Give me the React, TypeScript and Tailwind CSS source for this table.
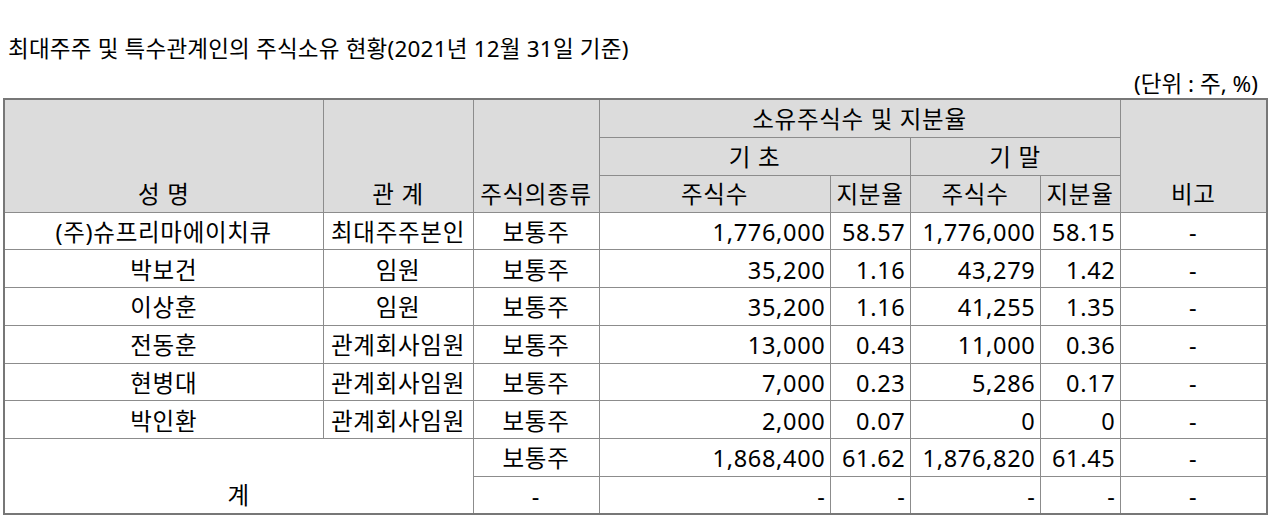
const rows = [
  { name: "(주)슈프리마에이치큐", rel: "최대주주본인", kind: "보통주", a: "1,776,000", b: "58.57", c: "1,776,000", d: "58.15" },
  { name: "박보건", rel: "임원", kind: "보통주", a: "35,200", b: "1.16", c: "43,279", d: "1.42" },
  { name: "이상훈", rel: "임원", kind: "보통주", a: "35,200", b: "1.16", c: "41,255", d: "1.35" },
  { name: "전동훈", rel: "관계회사임원", kind: "보통주", a: "13,000", b: "0.43", c: "11,000", d: "0.36" },
  { name: "현병대", rel: "관계회사임원", kind: "보통주", a: "7,000", b: "0.23", c: "5,286", d: "0.17" },
  { name: "박인환", rel: "관계회사임원", kind: "보통주", a: "2,000", b: "0.07", c: "0", d: "0" },
];

// header cells spanning rows sit at the bottom, the rest are centred
const thSpan = "border border-[#8c8c8c] bg-[#dcdcdc] font-normal text-center align-bottom px-[2px] pb-[3px]";
const th = "border border-[#8c8c8c] bg-[#dcdcdc] font-normal text-center align-middle px-[2px] pt-[1px]";
const td = "border border-[#8c8c8c] text-center align-middle px-[2px] pt-[2px]";
const num = "border border-[#8c8c8c] text-right align-middle pr-[4px] pl-[2px] pt-[2px]";

export default function App() {
  return (
    <div className="w-[1280px] h-[530px] bg-white text-black overflow-hidden font-['Noto_Sans','Noto_Sans_CJK_KR',sans-serif]">
      <div className="pt-[34px] pl-[8px] text-[22.5px] leading-[30px] tracking-[0.2px] whitespace-nowrap">
        최대주주 및 특수관계인의 주식소유 현황(2021년 12월 31일 기준)
      </div>
      <div className="mt-[6px] pr-[22px] text-right text-[22.5px] leading-[28px]">(단위 : 주, %)</div>
      <table className="ml-[3px] w-[1263px] table-fixed border-collapse border-2 border-[#777] text-[23.5px] leading-[30px] tracking-[0.7px] whitespace-nowrap">
        <colgroup>
          <col className="w-[319px]" />
          <col className="w-[150px]" />
          <col className="w-[126px]" />
          <col className="w-[231px]" />
          <col className="w-[80px]" />
          <col className="w-[130px]" />
          <col className="w-[80px]" />
          <col className="w-[147px]" />
        </colgroup>
        <thead>
          <tr className="h-[38px]">
            <th rowSpan={3} className={thSpan}>성 명</th>
            <th rowSpan={3} className={thSpan}>관 계</th>
            <th rowSpan={3} className={thSpan}>주식의종류</th>
            <th colSpan={4} className={th}>소유주식수 및 지분율</th>
            <th rowSpan={3} className={thSpan}>비고</th>
          </tr>
          <tr className="h-[38px]">
            <th colSpan={2} className={th}>기 초</th>
            <th colSpan={2} className={th}>기 말</th>
          </tr>
          <tr className="h-[37px]">
            <th className={th}>주식수</th>
            <th className={th}>지분율</th>
            <th className={th}>주식수</th>
            <th className={th}>지분율</th>
          </tr>
        </thead>
        <tbody>
          {rows.map((r) => (
            <tr key={r.name} className="h-[37.75px]">
              <td className={td}>{r.name}</td>
              <td className={td}>{r.rel}</td>
              <td className={td}>{r.kind}</td>
              <td className={num}>{r.a}</td>
              <td className={num}>{r.b}</td>
              <td className={num}>{r.c}</td>
              <td className={num}>{r.d}</td>
              <td className={td}>-</td>
            </tr>
          ))}
          <tr className="h-[37.75px]">
            <td rowSpan={2} colSpan={2} className="border border-[#8c8c8c] text-center align-bottom pb-[3px]">계</td>
            <td className={td}>보통주</td>
            <td className={num}>1,868,400</td>
            <td className={num}>61.62</td>
            <td className={num}>1,876,820</td>
            <td className={num}>61.45</td>
            <td className={td}>-</td>
          </tr>
          <tr className="h-[37.75px]">
            <td className={td}>-</td>
            <td className={num}>-</td>
            <td className={num}>-</td>
            <td className={num}>-</td>
            <td className={num}>-</td>
            <td className={td}>-</td>
          </tr>
        </tbody>
      </table>
    </div>
  );
}
